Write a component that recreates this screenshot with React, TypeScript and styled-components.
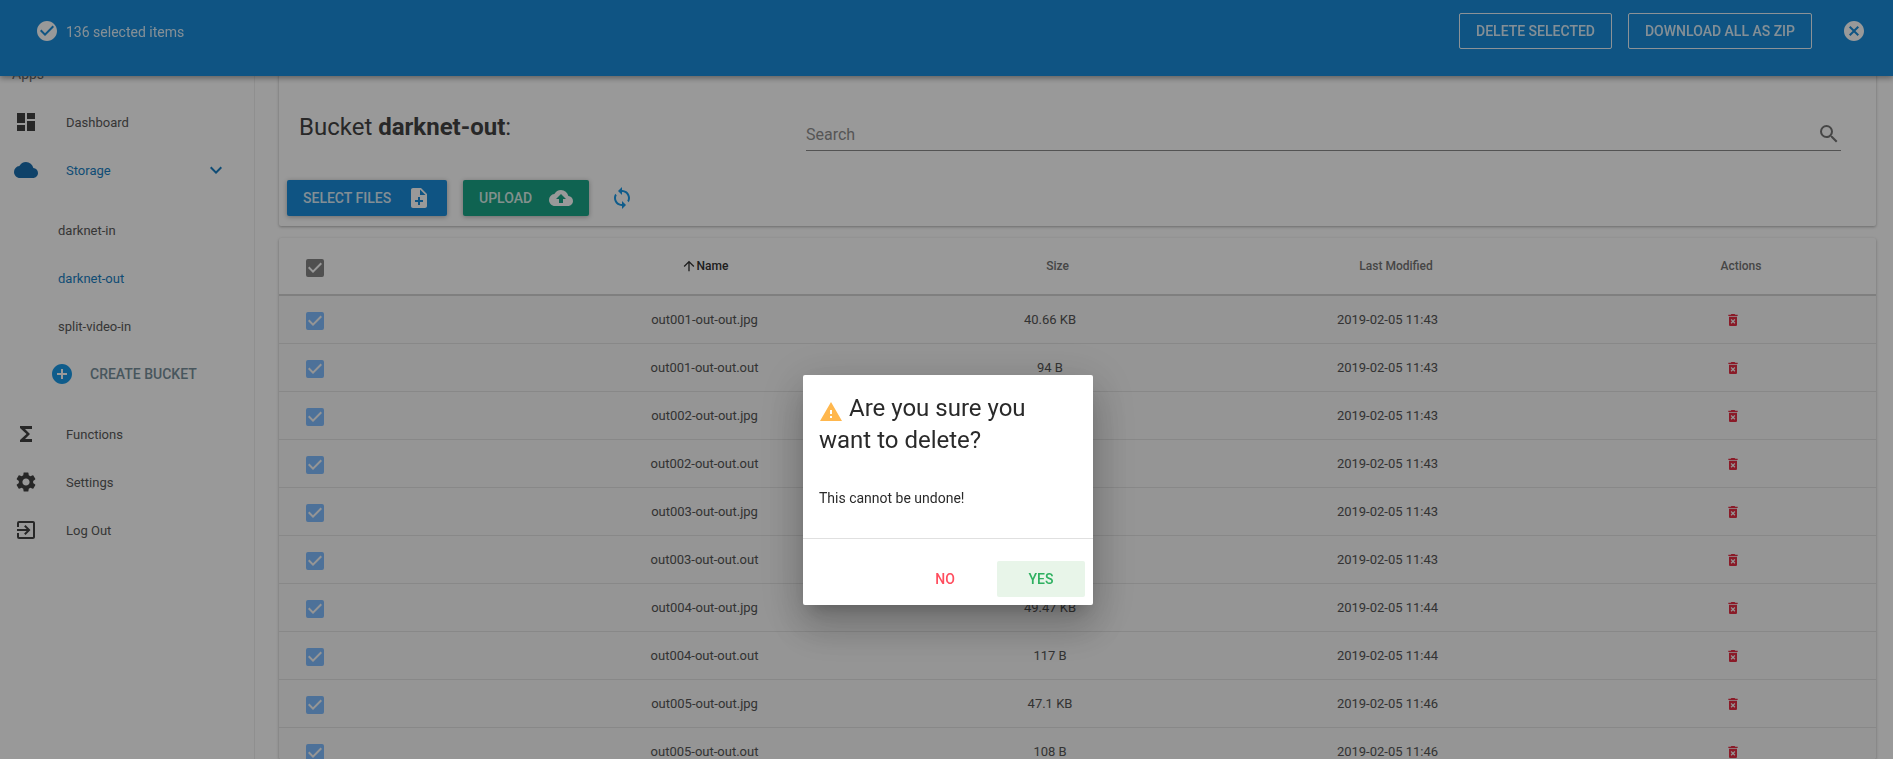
import React from "react";
import styled, { createGlobalStyle } from "styled-components";
import {
  MdDashboard, MdCloud, MdExpandMore, MdFunctions, MdSettings, MdExitToApp, MdCheckCircle, MdCancel,
  MdSearch, MdNoteAdd, MdCloudUpload, MdSync, MdDeleteForever, MdWarning, MdAddCircle, MdArrowUpward, MdCheckBox,
} from "react-icons/md";

const Global = createGlobalStyle`
  html, body { margin: 0; padding: 0; height: 100%; overflow: hidden; background: #fff; }
  body { font-family: Roboto, "Liberation Sans", sans-serif; color: #212121; }
  * { box-sizing: border-box; }
`;

const Page = styled.div`
  display: flex;
  height: 759px;
  overflow: hidden;
  background: #fff;
`;

const Sidebar = styled.nav`
  flex: 0 0 255px;
  border-right: 1px solid #eee;
  padding-top: 50px;
  display: flex;
  flex-direction: column;
`;

const SectionLabel = styled.div`
  height: 48px;
  padding: 16px 0 0 12px;
  font-size: 14px;
  color: #757575;
`;

const NavRow = styled.div<{ $active?: boolean }>`
  height: 48px;
  display: flex;
  align-items: center;
  font-size: 13px;
  color: ${(p) => (p.$active ? "#1a7fc4" : "#5a5a5a")};
  position: relative;
  svg { flex: none; }
`;

const NavIcon = styled.span<{ $active?: boolean }>`
  width: 66px;
  padding-left: 14px;
  display: flex;
  font-size: 24px;
  color: ${(p) => (p.$active ? "#1a6fb0" : "#424242")};
`;

const NavChevron = styled.span`
  margin-left: auto;
  margin-right: 26px;
  display: flex;
  font-size: 24px;
  color: #1a7fc4;
`;

const SubList = styled.div`
  margin: 12px 0;
`;

const SubRow = styled.div<{ $active?: boolean }>`
  height: 48px;
  display: flex;
  align-items: center;
  padding-left: 58px;
  font-size: 13px;
  color: ${(p) => (p.$active ? "#1a7fc4" : "#5a5a5a")};
`;

const CreateRow = styled.div`
  height: 48px;
  display: flex;
  align-items: center;
  padding-left: 50px;
  gap: 16px;
  font-size: 14px;
  font-weight: 500;
  color: #78909c;
  svg { color: #1a9ae8; font-size: 24px; }
`;

const Main = styled.main`
  flex: 1;
  padding: 0 17px 0 24px;
  display: flex;
  flex-direction: column;
  gap: 12px;
  min-width: 0;
`;

const Card = styled.section`
  background: #fff;
  border-radius: 2px;
  box-shadow: 0 1px 3px rgba(0, 0, 0, 0.3);
`;

const HeaderCard = styled(Card)`
  height: 226px;
  padding: 0 8px;
  display: flex;
  flex-direction: column;
`;

const TitleRow = styled.div`
  display: flex;
  height: 180px;
  padding: 0 12px;
  align-items: flex-start;
`;

const BucketTitle = styled.h2`
  margin: 112px 0 0;
  width: 507px;
  font-size: 24px;
  line-height: 30px;
  font-weight: 400;
  color: #444;
  b { font-weight: 700; }
`;

const SearchBox = styled.div`
  margin-top: 114px;
  width: 1035px;
  height: 37px;
  border-bottom: 1px solid #8a8a8a;
  display: flex;
  align-items: center;
  justify-content: space-between;
  font-size: 16px;
  color: #8f8f8f;
  padding-top: 4px;
  svg { font-size: 24px; color: #757575; }
`;

const Toolbar = styled.div`
  display: flex;
  align-items: center;
  gap: 16px;
  height: 36px;
`;

const ActionButton = styled.button<{ $bg: string; $w: number }>`
  width: ${(p) => p.$w}px;
  height: 36px;
  border: 0;
  border-radius: 2px;
  background: ${(p) => p.$bg};
  color: rgba(255, 255, 255, 0.85);
  font: 500 14px Roboto, sans-serif;
  box-shadow: 0 1px 5px rgba(0, 0, 0, 0.3);
  display: flex;
  align-items: center;
  justify-content: space-between;
  padding: 0 16px;
  svg { font-size: 24px; color: #fff; }
`;

const RefreshIcon = styled.span`
  display: flex;
  font-size: 24px;
  color: #1a9ae8;
  margin-left: 5px;
`;

const TableCard = styled(Card)`
  flex: 1;
  overflow: hidden;
`;

const GridRow = styled.div`
  display: grid;
  grid-template-columns: 254px 343px 348px 327px 1fr;
  align-items: center;
`;

const HeadRow = styled(GridRow)`
  height: 58px;
  border-bottom: 2px solid #d4d4d4;
  font-size: 12px;
  font-weight: 500;
  color: #757575;
`;

const BodyRow = styled(GridRow)`
  height: 48px;
  background: #f8f8f8;
  border-bottom: 1px solid #e3e3e3;
  font-size: 13px;
  color: #555;
  text-align: center;
`;

const CheckCell = styled.div<{ $color: string }>`
  padding-left: 24px;
  padding-top: 3px;
  display: flex;
  font-size: 24px;
  color: ${(p) => p.$color};
`;

const HeadCell = styled.div<{ $shift: number }>`
  text-align: center;
  padding-left: ${(p) => p.$shift}px;
`;

const NameHead = styled.div`
  display: flex;
  align-items: center;
  justify-content: center;
  color: #333;
  svg { font-size: 16px; }
`;

const TrashCell = styled.div`
  display: flex;
  justify-content: center;
  padding-left: 39px;
  font-size: 16px;
  color: #e62e44;
`;

const TopBar = styled.header`
  position: fixed;
  inset: 0 0 auto 0;
  height: 76px;
  background: #1a8dda;
  color: rgba(255, 255, 255, 0.85);
  display: flex;
  align-items: center;
  padding: 0 27px 14px 37px;
  box-shadow: 0 2px 6px rgba(0, 0, 0, 0.4);
  font-size: 14px;
`;

const Selected = styled.div`
  display: flex;
  align-items: center;
  gap: 7px;
  font-size: 14px;
  flex: 1;
  svg { font-size: 24px; margin-left: -2px; color: #fff; }
`;

const SelectedText = styled.span`
  padding-top: 2px;
`;

const OutlineButton = styled.button<{ $w: number }>`
  width: ${(p) => p.$w}px;
  height: 36px;
  margin-right: 16px;
  border: 1px solid rgba(255, 255, 255, 0.9);
  border-radius: 2px;
  background: transparent;
  color: rgba(255, 255, 255, 0.85);
  font: 500 14px Roboto, sans-serif;
`;

const CloseIcon = styled.span`
  display: flex;
  margin-left: 14px;
  font-size: 24px;
  color: #fff;
`;

const Backdrop = styled.div`
  position: fixed;
  inset: 0;
  background: rgba(0, 0, 0, 0.4);
`;

const Dialog = styled.div`
  position: fixed;
  left: 803px;
  top: 375px;
  width: 290px;
  height: 230px;
  background: #fff;
  border-radius: 2px;
  box-shadow: 0 11px 15px -7px rgba(0, 0, 0, 0.2), 0 24px 38px 3px rgba(0, 0, 0, 0.14), 0 9px 46px 8px rgba(0, 0, 0, 0.12);
  display: flex;
  flex-direction: column;
`;

const DialogTitle = styled.h3`
  margin: 0;
  padding: 17px 16px 0;
  font-size: 24px;
  line-height: 32px;
  font-weight: 400;
  color: #2a2a2a;
  svg { font-size: 24px; color: #ffb74d; vertical-align: -8px; margin-right: 6px; }
`;

const DialogBody = styled.p`
  margin: 0;
  padding-top: 32px;
  padding-left: 16px;
  height: 83px;
  font-size: 14px;
  line-height: 20px;
  color: #2a2a2a;
  border-bottom: 1px solid #e0e0e0;
`;

const DialogActions = styled.div`
  flex: 1;
  display: flex;
  align-items: flex-start;
  justify-content: flex-end;
  padding: 22px 8px 0 0;
  gap: 8px;
`;

const DialogButton = styled.button<{ $color: string; $bg?: string }>`
  width: 88px;
  height: 36px;
  border: 0;
  border-radius: 2px;
  background: ${(p) => p.$bg ?? "transparent"};
  color: ${(p) => p.$color};
  font: 500 14px Roboto, sans-serif;
`;

const files: [string, string, string][] = [
  ["out001-out-out.jpg", "40.66 KB", "2019-02-05 11:43"],
  ["out001-out-out.out", "94 B", "2019-02-05 11:43"],
  ["out002-out-out.jpg", "41.2 KB", "2019-02-05 11:43"],
  ["out002-out-out.out", "94 B", "2019-02-05 11:43"],
  ["out003-out-out.jpg", "43.5 KB", "2019-02-05 11:43"],
  ["out003-out-out.out", "94 B", "2019-02-05 11:43"],
  ["out004-out-out.jpg", "49.47 KB", "2019-02-05 11:44"],
  ["out004-out-out.out", "117 B", "2019-02-05 11:44"],
  ["out005-out-out.jpg", "47.1 KB", "2019-02-05 11:46"],
  ["out005-out-out.out", "108 B", "2019-02-05 11:46"],
];

export default function App() {
  return (
    <>
      <Global />
      <Page>
        <Sidebar>
          <SectionLabel>Apps</SectionLabel>
          <NavRow><NavIcon><MdDashboard /></NavIcon>Dashboard</NavRow>
          <NavRow $active>
            <NavIcon $active><MdCloud /></NavIcon>Storage
            <NavChevron><MdExpandMore /></NavChevron>
          </NavRow>
          <SubList>
            <SubRow>darknet-in</SubRow>
            <SubRow $active>darknet-out</SubRow>
            <SubRow>split-video-in</SubRow>
            <CreateRow><MdAddCircle />CREATE BUCKET</CreateRow>
          </SubList>
          <NavRow><NavIcon><MdFunctions /></NavIcon>Functions</NavRow>
          <NavRow><NavIcon><MdSettings /></NavIcon>Settings</NavRow>
          <NavRow><NavIcon><MdExitToApp /></NavIcon>Log Out</NavRow>
        </Sidebar>
        <Main>
          <HeaderCard>
            <TitleRow>
              <BucketTitle>Bucket <b>darknet-out</b>:</BucketTitle>
              <SearchBox>Search<MdSearch /></SearchBox>
            </TitleRow>
            <Toolbar>
              <ActionButton $bg="#1a8dda" $w={160}>SELECT FILES<MdNoteAdd /></ActionButton>
              <ActionButton $bg="#1aa688" $w={126}>UPLOAD<MdCloudUpload /></ActionButton>
              <RefreshIcon><MdSync /></RefreshIcon>
            </Toolbar>
          </HeaderCard>
          <TableCard>
            <HeadRow>
              <CheckCell $color="#858585"><MdCheckBox /></CheckCell>
              <NameHead><MdArrowUpward />Name</NameHead>
              <HeadCell $shift={15}>Size</HeadCell>
              <HeadCell $shift={17}>Last Modified</HeadCell>
              <HeadCell $shift={55}>Actions</HeadCell>
            </HeadRow>
            {files.map(([name, size, date]) => (
              <BodyRow key={name}>
                <CheckCell $color="#80bcff"><MdCheckBox /></CheckCell>
                <div>{name}</div>
                <div>{size}</div>
                <div>{date}</div>
                <TrashCell><MdDeleteForever /></TrashCell>
              </BodyRow>
            ))}
          </TableCard>
        </Main>
      </Page>
      <TopBar>
        <Selected><MdCheckCircle /><SelectedText>136 selected items</SelectedText></Selected>
        <OutlineButton $w={153}>DELETE SELECTED</OutlineButton>
        <OutlineButton $w={184}>DOWNLOAD ALL AS ZIP</OutlineButton>
        <CloseIcon><MdCancel /></CloseIcon>
      </TopBar>
      <Backdrop />
      <Dialog>
        <DialogTitle><MdWarning />Are you sure you want to delete?</DialogTitle>
        <DialogBody>This cannot be undone!</DialogBody>
        <DialogActions>
          <DialogButton $color="#ff4d5e">NO</DialogButton>
          <DialogButton $color="#2eb060" $bg="#e8f5e9">YES</DialogButton>
        </DialogActions>
      </Dialog>
    </>
  );
}
